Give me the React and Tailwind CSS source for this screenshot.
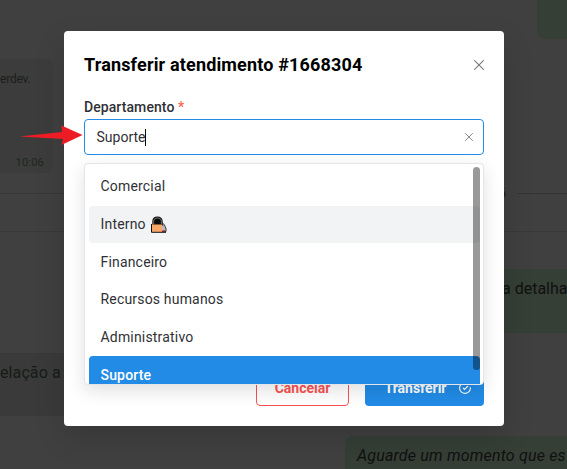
import React from 'react';

const departments = ['Comercial', 'Interno', 'Financeiro', 'Recursos humanos', 'Administrativo', 'Suporte'];

function Close({ className }) {
  return (
    <svg viewBox="0 0 10 10" className={className} fill="none" stroke="currentColor" strokeWidth="1.1">
      <path d="M.3.3l9.400 9.400M9.700.3L.3 9.700" />
    </svg>
  );
}

function Lock() {
  return (
    <svg viewBox="0 0 16 17" className="ml-[5px] h-[17px] w-4 shrink-0">
      <path d="M10.500 6.500l2.700 2 1.800 4v3h-5z" fill="#b9b9bd" stroke="#222" strokeWidth=".9" />
      <path d="M11.300 14.200h2.700v1.200h-2.700z" fill="#d62c35" />
      <path d="M2 9V5.500C2 2.600 4 1.300 6.500 1.300S11 2.600 11 5.500V9z" fill="#0c0c0c" stroke="#111" strokeWidth="1.400" />
      <path d="M2.600 8V5.500C2.600 3.200 4.300 2 6.500 2s3.900 1.200 3.900 3.500V8" fill="none" stroke="#8b8b8b" strokeWidth=".8" />
      <path d="M1 8.500h10v7.500H1z" fill="#f7a668" />
      <path d="M.5 8v8.300h14.500" fill="none" stroke="#111" strokeWidth="1" />
    </svg>
  );
}

function Chat() {
  return (
    <div className="flex h-full flex-col text-[#101010]">
      <div className="h-[39px] w-[30px] shrink-0 self-end rounded-bl-lg bg-[#353f36]" />
      <div className="mt-5 flex h-[114px] w-[53px] shrink-0 flex-col justify-between rounded-r-lg bg-[#3b3c3b]">
        <div className="mt-3 h-4 self-start whitespace-nowrap text-[12px] leading-4 tracking-[-0.2px] text-[#1b1f1b]">erdev.</div>
        <div className="mb-[2px] mr-[9px] self-end text-[11px] leading-4 tracking-[0.2px] text-[#1c281c]">10:06</div>
      </div>
      <div className="mt-2.5 flex h-5 shrink-0 items-center">
        <div className="h-px w-[440px] bg-[#383838]" />
        <div className="w-[77px] pr-[11px] text-right text-[12px] leading-5 text-[#1c1c1c]">6</div>
        <div className="h-px grow bg-[#343434]" />
      </div>
      <div className="mt-7 h-px shrink-0 bg-[#393939]" />
      <div className="mt-[37px] h-16 w-[120px] shrink-0 self-end whitespace-nowrap bg-[#353f36] pl-[55px] pt-2.5 text-[16px] leading-5">a detalha</div>
      <div className="mt-5 h-[63px] w-[120px] shrink-0 bg-[#3a3a3a] pt-2.5 text-[16px] leading-5 tracking-[0.100px] text-[#151c16]">elação a</div>
      <div className="mt-5 h-[33px] w-[222px] shrink-0 self-end whitespace-nowrap rounded-tl-lg bg-[#353f36] pl-3 pt-2.5 text-[16px] italic leading-5 tracking-[0.180px]">Aguarde um momento que es</div>
    </div>
  );
}

function Dropdown() {
  return (
    <div className="absolute left-0 top-11 h-[222px] w-[400px] overflow-hidden rounded border border-[#e4e5e9] bg-white shadow-[0_6px_18px_rgba(0,0,0,.12)]">
      <ul className="pl-1 pr-[3px] pt-1">
        {departments.map((name, i) => (
          <li
            key={name}
            className={
              'flex h-[37.700px] items-center rounded pl-[11.500px] text-[14px] tracking-[0.180px] ' +
              (i === 5 ? 'bg-[#228be6] font-medium text-white' : i === 1 ? 'bg-[#f1f3f5] text-[#303136]' : 'text-[#303136]')
            }
          >
            {name}
            {i === 1 && <Lock />}
          </li>
        ))}
      </ul>
      <div className="absolute right-[3px] top-[3px] h-[203px] w-[7px] rounded-full bg-black/40" />
    </div>
  );
}

export default function App() {
  return (
    <div className="relative h-[469px] w-[567px] overflow-hidden bg-[#404040] font-['Roboto',sans-serif]">
      <Chat />
      <div className="absolute inset-0 flex items-start pl-16 pt-[31px]">
        <section className="flex h-[395px] w-[440px] flex-col rounded bg-white px-5 shadow-[0_12px_30px_rgba(0,0,0,.15)]">
          <header className="mt-[22px] flex h-6 items-center justify-between">
            <h1 className="whitespace-nowrap text-[18px] font-bold leading-6 tracking-[0.160px] text-black">Transferir atendimento #1668304</h1>
            <Close className="h-2.5 w-2.5 text-[#77797c]" />
          </header>
          <label className="mt-5 h-5 text-[14px] font-medium leading-5 tracking-[0.080px] text-[#303136]">
            Departamento <span className="text-[#fa6552]">*</span>
          </label>
          <div className="relative mt-[2px] h-9">
            <div className="flex h-9 items-center rounded border border-[#228be6] bg-white pl-[11.500px] pr-3 text-[14px] text-[#303136]">
              <span>Suporte</span>
              <span className="h-[17px] w-px bg-black" />
              <Close className="ml-auto mr-[-2px] h-2 w-2 text-[#77797c]" />
            </div>
            <Dropdown />
          </div>
          <footer className="mb-5 mt-auto flex justify-end gap-4 text-[14px] font-bold">
            <button className="h-9 w-[93px] rounded border border-[#fa5252] pt-px text-[#fa5252]">Cancelar</button>
            <button className="flex h-9 w-[119px] items-center justify-center gap-3 rounded bg-[#228be6] pl-1.5 text-white">
              Transferir
              <svg viewBox="0 0 12 12" className="h-3 w-3" fill="none" stroke="white" strokeWidth="1.100">
                <path d="M11.400 5.200v.8a5.400 5.400 0 1 1-2.400-4.500M4 5.800l1.500 1.600L9 4" />
              </svg>
            </button>
          </footer>
        </section>
      </div>
      <svg viewBox="0 0 64 20" className="absolute left-[19px] top-[125px] h-5 w-16 fill-[#ed1c24]">
        <path d="M0 11.500l43-4.500L42.500.5 63.500 10 42.500 20l1.500-6z" />
      </svg>
    </div>
  );
}
